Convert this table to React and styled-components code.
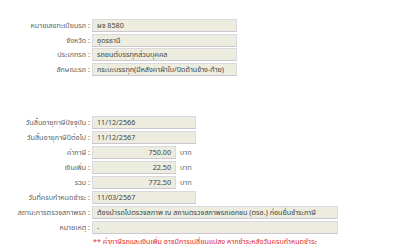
import React from "react";
import styled, { createGlobalStyle } from "styled-components";

const Global = createGlobalStyle`
  html, body { margin: 0; padding: 0; background: #fff; }
  body { font-family: Tahoma, "Noto Sans Thai", "Noto Sans", "DejaVu Sans", sans-serif; font-size: 7.2px; color: #444; }
`;

const Page = styled.div`
  width: 400px;
  height: 250px;
  padding-top: 19px;
  box-sizing: border-box;
  display: flex;
  flex-direction: column;
  gap: 40px;
`;

const Section = styled.div`
  display: grid;
  grid-template-columns: 90px max-content;
  justify-content: start;
  column-gap: 2px;
  row-gap: ${(p) => p.$gap}px;
  align-items: center;
`;

const Label = styled.div`
  text-align: right;
  color: #5f5f5f;
  white-space: nowrap;
  line-height: 13px;
`;

const ValueRow = styled.div`
  display: flex;
  align-items: center;
  gap: 4px;
`;

const Box = styled.div`
  box-sizing: border-box;
  width: ${(p) => p.$w}px;
  height: 13px;
  line-height: 11px;
  padding: 0 4px;
  background: #ececdf;
  border: 1px solid #dcd8e0;
  border-bottom-color: #cbc6d2;
  color: #444;
  white-space: nowrap;
  overflow: hidden;
  text-align: ${(p) => (p.$right ? "right" : "left")};
`;

const Unit = styled.span`
  color: #5f5f5f;
`;

const Note = styled.div`
  grid-column: 2;
  justify-self: start;
  padding-left: 1px;
  color: #e0282c;
  line-height: 12px;
  white-space: nowrap;
`;

const top = [
  ["หมายเลขทะเบียนรถ", "ผจ 8580"],
  ["จังหวัด", "อุดรธานี"],
  ["ประเภทรถ", "รถยนต์บรรทุกส่วนบุคคล"],
  ["ลักษณะรถ", "กระบะบรรทุก(มีหลังคาผ้าใบ/ปิดด้านข้าง-ท้าย)"],
];

const bottom = [
  ["วันสิ้นอายุภาษีปัจจุบัน", "11/12/2566", 104],
  ["วันสิ้นอายุภาษีปีต่อไป", "11/12/2567", 104],
  ["ค่าภาษี", "750.00", 84, true],
  ["เงินเพิ่ม", "22.50", 84, true],
  ["รวม", "772.50", 84, true],
  ["วันที่ครบกำหนดชำระ", "11/03/2567", 104],
  ["สถานะการตรวจสภาพรถ", "ต้องนำรถไปตรวจสภาพ ณ สถานตรวจสภาพรถเอกชน (ตรอ.) ก่อนยื่นชำระภาษี", 246],
  ["หมายเหตุ", "-", 246],
];

export default function App() {
  return (
    <>
      <Global />
      <Page>
        <Section $gap={1.5}>
          {top.map(([l, v]) => (
            <React.Fragment key={l}>
              <Label>{l} :</Label>
              <ValueRow>
                <Box $w={145}>{v}</Box>
              </ValueRow>
            </React.Fragment>
          ))}
        </Section>
        <Section $gap={2}>
          {bottom.map(([l, v, w, money]) => (
            <React.Fragment key={l}>
              <Label>{l} :</Label>
              <ValueRow>
                <Box $w={w} $right={money}>{v}</Box>
                {money && <Unit>บาท</Unit>}
              </ValueRow>
            </React.Fragment>
          ))}
          <Note>** ค่าภาษีรถและเงินเพิ่ม อาจมีการเปลี่ยนแปลง หากชำระหลังวันครบกำหนดชำระ</Note>
        </Section>
      </Page>
    </>
  );
}
